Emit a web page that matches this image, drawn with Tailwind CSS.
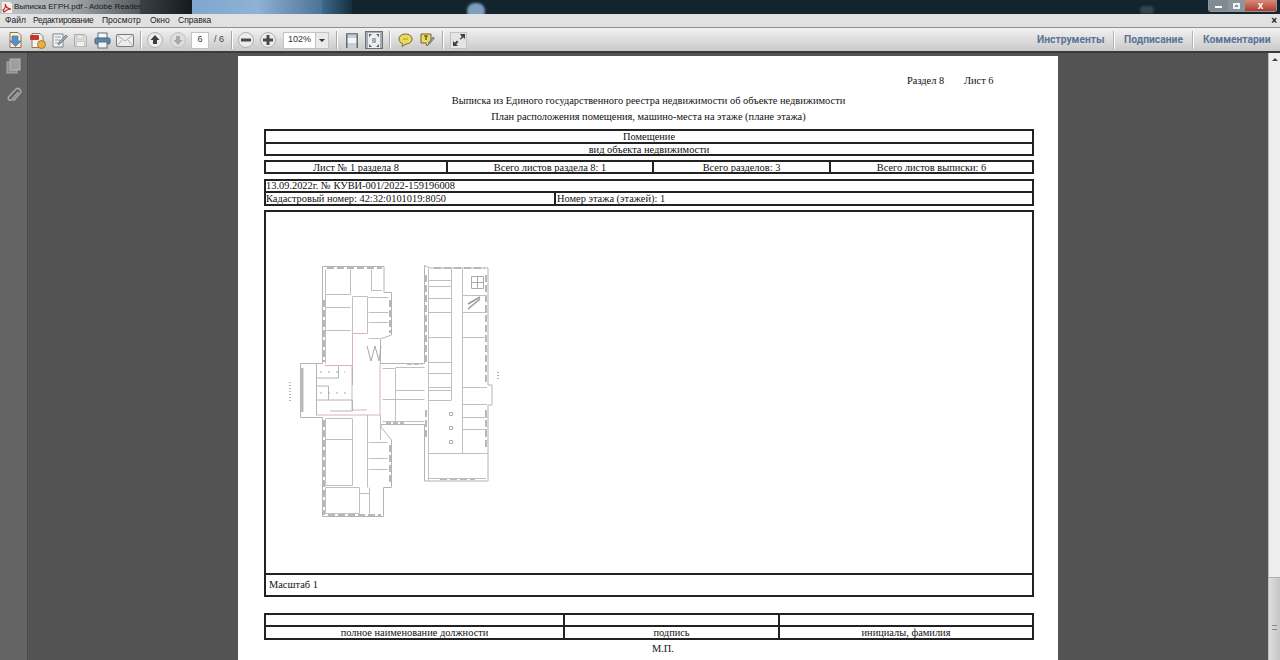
<!DOCTYPE html>
<html lang="ru">
  <head>
    <meta charset="UTF-8" />
    <title>Выписка ЕГРН.pdf - Adobe Reader</title>
    <script src="https://cdn.jsdelivr.net/npm/@tailwindcss/browser@4"></script>
  </head>
  <body class="w-[1280px] h-[660px] overflow-hidden bg-[#535353] font-['Liberation_Serif',serif]">
    <!-- title bar -->
    <div class="relative h-[14px] bg-[#14242e] overflow-hidden flex items-center">
      <div class="absolute left-0 top-0 h-full w-[140px] bg-gradient-to-r from-[#c2c5c7] via-[#a4a8ab] to-[#555b60]"></div>
      <div class="absolute left-[140px] top-0 h-full w-[55px] bg-gradient-to-r from-[#3a4046] to-[#10181e]"></div>
      <div class="absolute left-[192px] top-0 h-full w-[130px] bg-gradient-to-r from-[#7fa6cf] via-[#8fb2d6] to-[#4d7395]"></div>
      <div class="absolute left-[322px] top-0 h-full w-[30px] bg-gradient-to-r from-[#3f6a8c] to-[#14303f]"></div>
      <div class="absolute left-[467px] top-[3px] h-[16px] w-[18px] rounded-full bg-[#7c9dbd] blur-[1px]"></div>
      <div class="absolute left-[1140px] top-[6px] h-[8px] w-[14px] rounded-full bg-[#33454f] blur-[1px]"></div>
      <svg class="relative ml-[2px] w-[10px] h-[11px]" viewBox="0 0 10 11"><path d="M0 0h8l2 2v9H0z" fill="#f4f0ee"/><path d="M1 8c2-1 3-4 2-6 1 3 3 5 6 5-3 0-5 1-7 3z" fill="none" stroke="#c4201c" stroke-width="1.2"/></svg>
      <span class="relative ml-[2px] text-[8px] leading-none text-[#16181a] font-['Liberation_Sans',sans-serif] whitespace-nowrap">Выписка ЕГРН.pdf - Adobe Reader</span>
      <div class="relative ml-auto mr-[3px] -mt-[2px] flex h-[12px] rounded-b-[3px] border border-t-0 border-[#8d969c] overflow-hidden">
        <div class="w-[19px] bg-[#7f8a91] flex items-center justify-center"><div class="w-[7px] h-[2px] mt-[3px] bg-white"></div></div>
        <div class="w-[17px] bg-[#8b969c] flex items-center justify-center"><div class="w-[7px] h-[6px] border-2 border-[#eef2f4]"></div></div>
        <div class="w-[31px] bg-gradient-to-b from-[#d88a7c] to-[#b03a2a] flex items-center justify-center text-[10px] leading-none font-bold text-white font-['Liberation_Sans',sans-serif]">x</div>
      </div>
    </div>

    <!-- menu -->
    <div class="h-[14px] bg-[#e1e1e1] flex items-center text-[8.5px] text-[#222] font-['Liberation_Sans',sans-serif] border-b border-[#8f8f8f]">
      <span class="ml-[5px] w-[28px]">Файл</span>
      <span class="w-[69px] tracking-[-0.3px]">Редактирование</span>
      <span class="w-[48px]">Просмотр</span>
      <span class="w-[28px]">Окно</span>
      <span>Справка</span>
      <span class="ml-auto mr-[3px] text-[10px] leading-none font-bold text-[#111]">×</span>
    </div>

    <!-- toolbar -->
    <div class="h-[25px] pt-[1px] bg-gradient-to-b from-[#f2f2f2] to-[#c9c9c9] border-b-2 border-[#3a3a3a] flex items-center text-[9px] text-[#333] font-['Liberation_Sans',sans-serif]">
      <svg class="ml-[6px] shrink-0 w-[18px] h-[18px]" viewBox="0 0 18 18"><path d="M4 1.500h8l3 3v12H4z" fill="#f6f1e2" stroke="#94723e"/><path d="M6 5h6v5h3l-5.500 5.500L4 10h2z" fill="#5d8fc6" stroke="#3c6596" stroke-width=".6"/></svg>
      <svg class="ml-[5px] shrink-0 w-[17px] h-[17px]" viewBox="0 0 17 17"><path d="M3 1.500h8l3 3v11H3z" fill="#f8f4ea" stroke="#8a7a66"/><rect x="1" y="3" width="9" height="5" rx="1" fill="#c8352c"/><circle cx="12.500" cy="12.500" r="4" fill="#e8b04a" stroke="#a87a20"/></svg>
      <svg class="ml-[5px] shrink-0 w-[17px] h-[17px]" viewBox="0 0 17 17"><path d="M2 2h10v13H2z" fill="#f4f6f6" stroke="#7c868c"/><path d="M4 5h6M4 8h5M4 11h3" stroke="#8c969c"/><path d="M7 13l1-3 7-7 1.500 1.500-7 7z" fill="#98a8b0" stroke="#5c6a72" stroke-width=".7"/></svg>
      <svg class="ml-[5px] shrink-0 w-[15px] h-[15px]" viewBox="0 0 15 15"><path d="M1.500 1.500h10l2 2v10h-12z" fill="#dcdcdc" stroke="#acacac"/><rect x="4" y="2" width="6" height="4" fill="#ededed" stroke="#b4b4b4" stroke-width=".6"/><rect x="3.500" y="8.500" width="8" height="5" fill="#efefef" stroke="#b4b4b4" stroke-width=".6"/></svg>
      <svg class="ml-[6px] shrink-0 w-[17px] h-[17px]" viewBox="0 0 17 17"><rect x="4" y="1" width="9" height="6" fill="#f8f8f8" stroke="#5e6f82"/><rect x="1" y="6" width="15" height="6" rx="1.500" fill="#5f86ad" stroke="#3f5f80"/><rect x="4" y="10" width="9" height="6" fill="#f4f4f4" stroke="#5e6f82"/></svg>
      <svg class="ml-[5px] shrink-0 w-[18px] h-[13px]" viewBox="0 0 18 13"><rect x=".5" y=".5" width="17" height="12" rx="1" fill="#eeeeee" stroke="#7a7a7a"/><path d="M1 1l8 6 8-6M1 12l5-6M17 12l-5-6" fill="none" stroke="#9a9a9a" stroke-width=".8"/></svg>
      <div class="ml-[6px] shrink-0 w-[2px] h-[18px] bg-[#a9a9a9] border-r border-white"></div>

      <svg class="ml-[5px] shrink-0 w-[16px] h-[16px]" viewBox="0 0 16 16"><circle cx="8" cy="8" r="7.500" fill="#ececec" stroke="#b0b0b0"/><path d="M8 3l4.500 5H10v4H6V8H3.500z" fill="#3d3d3d"/></svg>
      <svg class="ml-[7px] shrink-0 w-[16px] h-[16px]" viewBox="0 0 16 16"><circle cx="8" cy="8" r="7.500" fill="#dedede" stroke="#c0c0c0"/><path d="M8 13l4.500-5H10V4H6v4H3.500z" fill="#a8a8a8"/></svg>
      <div class="ml-[5px] shrink-0 w-[18px] h-[17px] bg-white border border-[#c4c4c4] flex items-center justify-center">6</div>
      <span class="ml-[5px] shrink-0 w-[12px] whitespace-nowrap text-[#444]">/ 6</span>
      <div class="ml-[5px] shrink-0 w-[2px] h-[18px] bg-[#a9a9a9] border-r border-white"></div>

      <svg class="ml-[5px] shrink-0 w-[16px] h-[16px]" viewBox="0 0 16 16"><circle cx="8" cy="8" r="7.500" fill="#ececec" stroke="#b0b0b0"/><rect x="3" y="6.500" width="10" height="3" fill="#4a4a4a"/></svg>
      <svg class="ml-[6px] shrink-0 w-[16px] h-[16px]" viewBox="0 0 16 16"><circle cx="8" cy="8" r="7.500" fill="#ececec" stroke="#b0b0b0"/><path d="M6.500 3h3v3.500H13v3H9.500V13h-3V9.500H3v-3h3.500z" fill="#4a4a4a"/></svg>
      <div class="ml-[7px] shrink-0 w-[46px] h-[17px] flex border border-[#c4c4c4] bg-white">
        <div class="w-[31px] flex items-center justify-center">102%</div>
        <div class="flex-1 bg-[#eaeaea] border-l border-[#c4c4c4] flex items-center justify-center"><div class="border-x-[3px] border-t-[3px] border-x-transparent border-t-[#333]"></div></div>
      </div>
      <div class="ml-[7px] shrink-0 w-[2px] h-[18px] bg-[#a9a9a9] border-r border-white"></div>

      <svg class="ml-[7px] shrink-0 w-[14px] h-[15px]" viewBox="0 0 14 15"><rect x="1" y="0" width="12" height="15" fill="#c9ced6"/><rect x="1" y="5" width="12" height="5" fill="#f4f5f6"/><rect x="1" y="0" width="1.500" height="15" fill="#646a72"/><rect x="11.500" y="0" width="1.500" height="15" fill="#646a72"/><rect x="1" y="0" width="12" height="1.500" fill="#7a818a"/></svg>
      <div class="ml-[6px] shrink-0 w-[18px] h-[18px] bg-[#a8acb2] border border-[#6e7278] flex items-center justify-center">
        <svg class="w-[12px] h-[15px]" viewBox="0 0 12 15"><rect width="12" height="15" fill="#eceef0"/><path d="M1 1h3L1 4zM11 1H8l3 3zM1 14h3l-3-3zM11 14H8l3-3z" fill="#5a6068"/><rect x="4" y="5" width="4" height="5" fill="#a4adb6"/></svg>
      </div>
      <div class="ml-[6px] shrink-0 w-[2px] h-[18px] bg-[#a9a9a9] border-r border-white"></div>

      <svg class="ml-[7px] shrink-0 w-[15px] h-[14px]" viewBox="0 0 15 14"><path d="M7.500 1C11 1 14 3 14 6s-3 5-6 5l-4 2.500.5-3C2 9.500 1 8 1 6c0-3 3-5 6.500-5z" fill="#ecd95e" stroke="#77683a"/><path d="M5 6h5" stroke="#a89a40"/></svg>
      <svg class="ml-[7px] shrink-0 w-[15px] h-[14px]" viewBox="0 0 15 14"><path d="M1 1h10v8l-4 4-1-3H1z" fill="#ecd95e" stroke="#6c6438"/><path d="M4 3h4M6 3v4" stroke="#4a4420" stroke-width="1.200"/><path d="M8 10l5-6 1.500 1-5 6z" fill="#8e9aa2" stroke="#59646c" stroke-width=".6"/></svg>
      <div class="ml-[7px] shrink-0 w-[2px] h-[18px] bg-[#a9a9a9] border-r border-white"></div>

      <div class="ml-[6px] shrink-0 w-[17px] h-[17px] bg-[#e4e4e4] border border-[#c2c2c2] flex items-center justify-center">
        <svg class="w-[12px] h-[12px]" viewBox="0 0 12 12"><path d="M7 0h5v5l-1.800-1.800-2.200 2.200L6.600 5l2.200-2.200zM0 12V7l1.800 1.800L4 6.600 5.400 8 3.200 10.200 5 12z" fill="#3e3e3e"/></svg>
      </div>

      <div class="ml-auto flex items-center h-full text-[10.3px] font-bold text-[#5b7499] font-['Roboto',sans-serif]">
        <span class="whitespace-nowrap w-[67px] text-center">Инструменты</span>
        <div class="mx-[9px] w-[2px] h-[18px] bg-[#b4b4b4] border-r border-white"></div>
        <span class="whitespace-nowrap w-[59px] text-center">Подписание</span>
        <div class="mx-[9px] w-[2px] h-[18px] bg-[#b4b4b4] border-r border-white"></div>
        <span class="mr-[10px] whitespace-nowrap w-[67px] text-center">Комментарии</span>
      </div>
    </div>

    <!-- document area -->
    <div class="flex h-[607px] overflow-hidden">
      <div class="w-[28px] shrink-0 bg-[#646464] border-r border-[#4a4a4a] flex flex-col items-center pt-[5px] gap-[13px]">
        <svg class="w-[16px] h-[16px]" viewBox="0 0 16 16"><rect x="1" y="4" width="10" height="11" fill="#8e8e8e" stroke="#a8a8a8"/><rect x="4" y="1" width="10" height="11" fill="#9e9e9e" stroke="#b6b6b6"/></svg>
        <svg class="w-[16px] h-[18px]" viewBox="0 0 16 18"><path d="M12.500 5L5.500 13a2.200 2.200 0 0 1-3-3l7.500-8a3 3 0 0 1 4.300 4l-7 8" fill="none" stroke="#a8a8a8" stroke-width="1.500"/></svg>
      </div>

      <div class="flex-1">
        <div class="ml-[210px] mt-[3px] w-[820px] h-[620px] bg-white text-[10.4px] text-[#111]">
          <div class="flex pl-[669px] pt-[18px] h-[37px] leading-[13px]">
            <span class="w-[57px]">Раздел 8</span><span>Лист 6</span>
          </div>
          <p class="text-center pl-[1px] leading-[16px] h-[16px]">Выписка из Единого государственного реестра недвижимости об объекте недвижимости</p>
          <p class="text-center pl-[1px] leading-[16px] h-[16px]">План расположения помещения, машино-места на этаже (плане этажа)</p>

          <div class="mx-[26px] mt-[4px] w-[770px] border-2 border-[#222] text-center">
            <div class="h-[13px] leading-[11px] border-b-2 border-[#222]">Помещение</div>
            <div class="h-[10px] leading-[11px]">вид объекта недвижимости</div>
          </div>

          <div class="mx-[26px] mt-[4px] w-[770px] h-[14px] border-2 border-[#222] flex text-center leading-[11px]">
            <div class="w-[182px] border-r-2 border-[#222]">Лист № 1 раздела 8</div>
            <div class="w-[206px] border-r-2 border-[#222]">Всего листов раздела 8: 1</div>
            <div class="w-[177px] border-r-2 border-[#222]">Всего разделов: 3</div>
            <div class="flex-1">Всего листов выписки: 6</div>
          </div>

          <div class="mx-[26px] mt-[5px] w-[770px] border-2 border-[#222]">
            <div class="h-[10px] leading-[10px]">13.09.2022г. № КУВИ-001/2022-159196008</div>
            <div class="h-[13px] border-t-2 border-[#222] flex leading-[11px]">
              <div class="w-[290px] border-r-2 border-[#222]">Кадастровый номер: 42:32:0101019:8050</div>
              <div class="pl-[1px]">Номер этажа (этажей): 1</div>
            </div>
          </div>

          <div class="mx-[26px] mt-[4px] w-[770px] border-2 border-[#222]">
            <div class="h-[363px] border-b-2 border-[#222] pt-[43px] pl-[19px]">
              <svg class="block w-[225px] h-[270px] blur-[0.4px]" viewBox="285 255 225 270" fill="none" stroke-width="1">
                <!-- outer walls -->
                <path stroke="#b4b4b4" d="M322.500 266.500H384V292.500H391.500V335L380.500 339V363.500H424.500V265.500L430 268H488V385H492V405H488V481H424.500V424.500H381V427L391.500 440V487.500H383.500V516.500H322.500V417.500H300.500V363.500H322.500Z"/>
                <!-- window bands -->
                <path stroke="#b8b8b8" stroke-width="2" stroke-dasharray="7 3" d="M327 268H382M324 300V362M324 420V515M328 515H381M390 300V333M390 445V485M434 268H485M486 275V382M486 410V450M426 275V362M426 410V440M440 479H475"/>
                <!-- left wing upper -->
                <path stroke="#c0c0c0" d="M325.500 269.500V363.500M350.500 269.500V294.500M325.500 294.500H350.500M371.500 269.500V290.500H382M352.500 296.500V333.500M352.500 296.500H367.500V333.500H352.500M325.500 307.500H350.500M325.500 330.500H350.500M368.500 297.500H388.500M368.500 312.500H388.500M368.500 322.500H388.500M368.500 338.500H380"/>
                <!-- stair -->
                <path stroke="#a8a8a8" d="M367 346L371 361L375 346L379 361L381 346"/>
                <path stroke="#dcb4b4" d="M325 365.500H352.500V333.500H367M352 366V410H367"/>
                <!-- annex -->
                <path stroke="#b4b4b4" d="M316.500 363.500V415M316.500 378H338.500V366M316.500 386H328.500V400M316.500 400H352.500V411H330M352.500 366V385"/>
                <path stroke="#aaa" stroke-dasharray="2 6" d="M320 372H345M320 393H348"/>
                <path stroke="#dcb4b4" d="M316 415H380V363"/>
                <!-- left wing lower -->
                <path stroke="#c0c0c0" d="M325.500 418.500H352.500V485.500H325.500ZM325.500 439.500H352.500M325.500 487.500H359.500V513.500H325.500ZM359.500 493.500H369.500V513.500M369.500 487.500V513.500M367.500 415V487.500M368.500 442.500H387.500M368.500 458.500H387.500M368.500 469.500H387.500M380.500 415V440"/>
                <!-- middle corridor -->
                <path stroke="#c0c0c0" d="M382.500 368.500H395.500V421.500M395.500 367.500H424.500M395.500 390.500H424.500M395.500 399.500H424.500M382.500 399.500H395.500M382.500 421.500H424.500"/>
                <path stroke="#bbb" stroke-width="2" stroke-dasharray="5 2" d="M386 423H404M407 364H422"/>
                <!-- right wing -->
                <path stroke="#c0c0c0" d="M428.500 268.500V481M451.500 268.500V400M462.500 269V402M428.500 280.500H451.500M428.500 286.500H451.500M428.500 298.500H451.500M428.500 312.500H451.500M428.500 337.500H451.500M428.500 362.500H451.500M428.500 373.500H451.500M428.500 387.500H451.500M428.500 390.500H451.500M428.500 400.500H451.500M462.500 295.500H487M462.500 312.500H487M462.500 337.500H487M462.500 387.500H487M462.500 404.500H487M462.500 417.500H487M462.500 429.500H487M462.500 402V453M428.500 453.500H488M428.500 478.500H486"/>
                <path stroke="#aaa" d="M471.500 276.500H483.500V288.500H471.500ZM477.500 276.500V288.500M471.500 282.500H483.500"/>
                <path stroke="#999" stroke-width="1.500" d="M468 309L480 299M468 304L480 297"/>
                <path stroke="#aaa" d="M449.500 412.500h3v3h-3zM449.500 426.500h3v3h-3zM449.500 440.500h3v3h-3z"/>
                <path stroke="#999" stroke-width="1.500" stroke-dasharray="1 2" d="M290 382V402M498 372V380"/>
                <path stroke="#bbb" stroke-width="3" d="M302 368V412"/>
              </svg>
            </div>
            <div class="h-[20px] pl-[3px] leading-[19px]">Масштаб 1</div>
          </div>

          <div class="mx-[26px] mt-[16px] w-[770px] border-2 border-[#222]">
            <div class="h-[12px] border-b-2 border-[#222] flex">
              <div class="w-[299px] border-r-2 border-[#222]"></div>
              <div class="w-[215px] border-r-2 border-[#222]"></div>
            </div>
            <div class="h-[11px] flex text-center leading-[12px]">
              <div class="w-[299px] border-r-2 border-[#222]">полное наименование должности</div>
              <div class="w-[215px] border-r-2 border-[#222]">подпись</div>
              <div class="flex-1">инициалы, фамилия</div>
            </div>
          </div>
          <p class="mt-[2px] text-center leading-[13px] pl-[30px]">М.П.</p>
        </div>
      </div>

      <div class="w-[12px] shrink-0 bg-[#ededed] border-l border-[#bcbcbc] flex flex-col">
        <div class="h-[8px] mt-[3px] flex justify-center"><div class="mt-[2px] border-x-[3px] border-b-[3px] border-x-transparent border-b-[#444]"></div></div>
        <div class="mt-[516px] h-[100px] shrink-0 bg-gradient-to-r from-[#dedede] to-[#c6c6c6] border-y border-[#b0b0b0] flex items-center justify-center">
          <div class="w-[5px] h-[5px] border-y border-[#888]"></div>
        </div>
      </div>
    </div>
  </body>
</html>
